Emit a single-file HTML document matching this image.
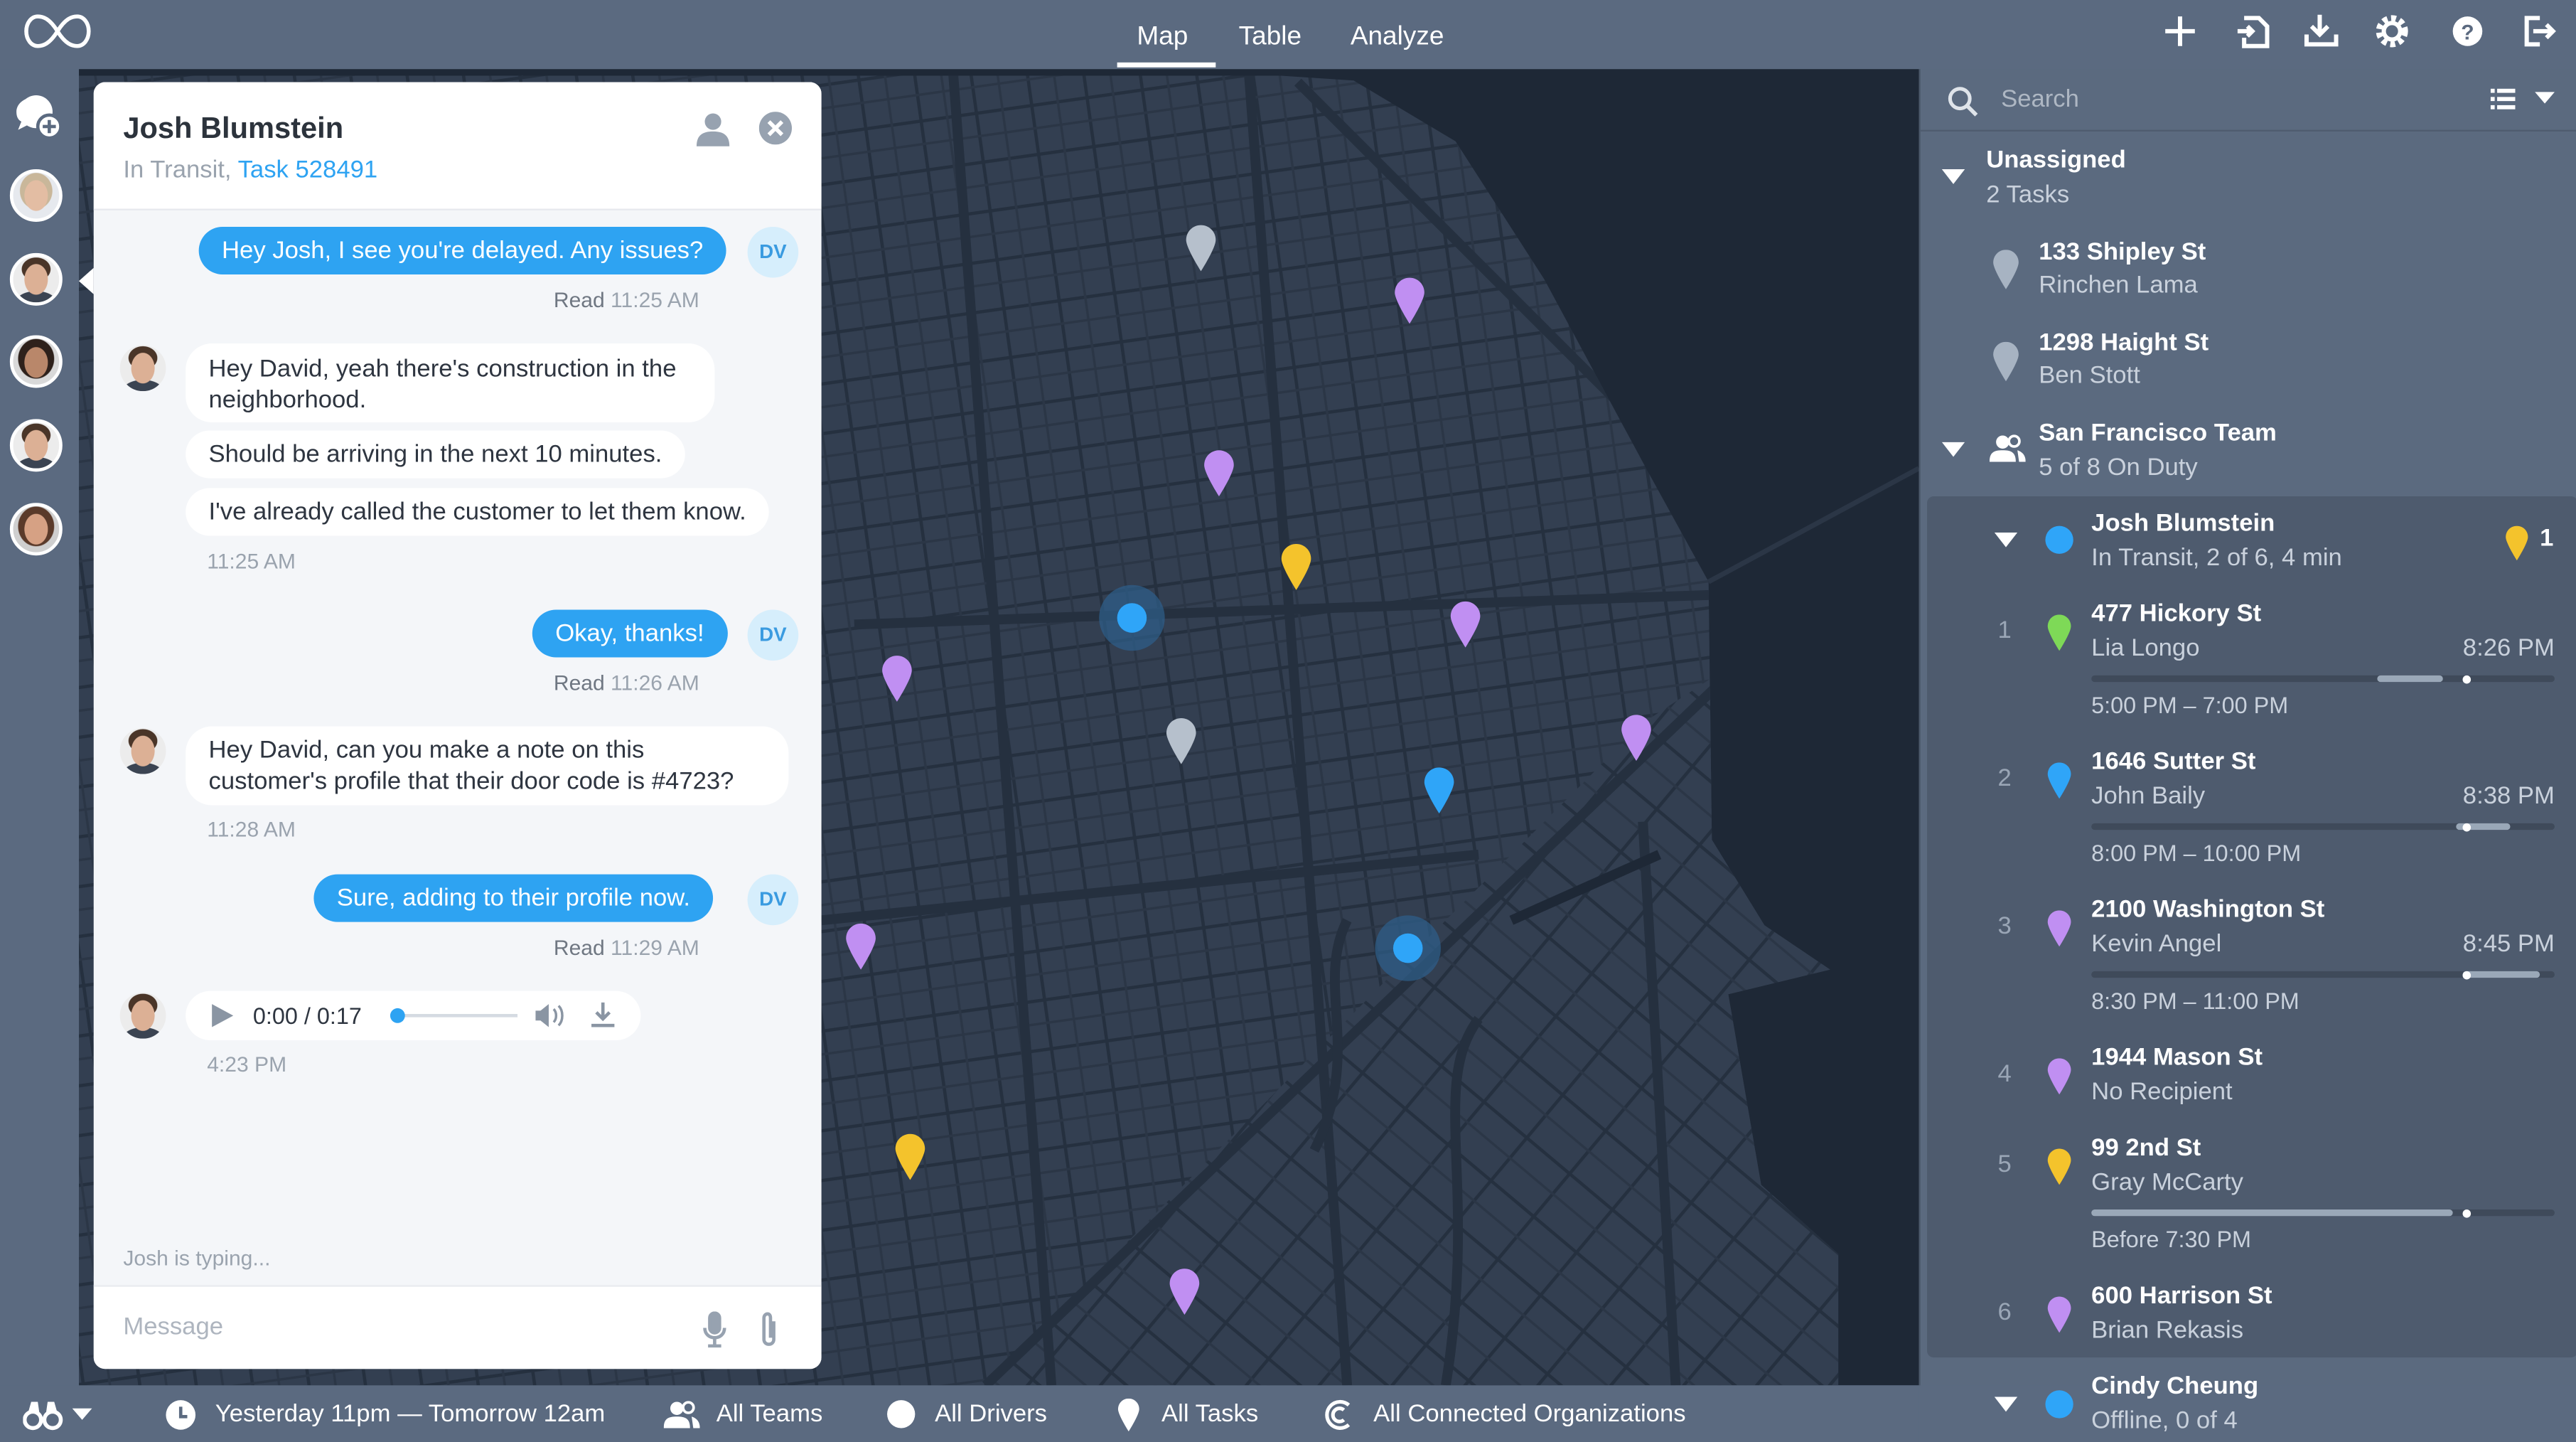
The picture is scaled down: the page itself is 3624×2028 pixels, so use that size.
<!DOCTYPE html>
<html><head><meta charset="utf-8"><style>
*{margin:0;padding:0;box-sizing:border-box}
html,body{width:3624px;height:2028px;overflow:hidden;background:#5b6a80}
#w{position:absolute;left:0;top:0;width:1568px;height:877.5px;transform:scale(2.31122);transform-origin:0 0;font-family:"Liberation Sans",sans-serif;background:#5b6a80;overflow:hidden}
.a{position:absolute}
.t{color:#fff;white-space:nowrap}
.rp .b{font-weight:bold;font-size:15px;color:#fff;position:absolute;white-space:nowrap}
.rp .s{font-size:15px;color:#c9d1dc;position:absolute;white-space:nowrap}
.rp .r{right:13px;left:auto!important}
.bub{position:absolute;border-radius:16px;font-size:15px;white-space:nowrap;height:29px;line-height:29px;padding:0 14px}
.me{background:#2ea3f2;color:#fff}
.them{background:#fff;color:#2e3540}
.dv{position:absolute;width:31px;height:31px;border-radius:50%;background:#d6eefc;color:#3a9be0;font-size:12px;font-weight:bold;text-align:center;line-height:31px}
.tm{position:absolute;font-size:13px;color:#9aa3ae;white-space:nowrap}
.tm b{color:#6f7782;font-weight:normal}
.av{position:absolute;width:32px;height:32px;border-radius:50%;border:2px solid #fff;background:radial-gradient(ellipse 26% 34% at 50% 50%,#dcb095 96%,transparent 100%),radial-gradient(ellipse 32% 26% at 50% 28%,#4a3528 96%,transparent 100%),radial-gradient(ellipse 45% 25% at 50% 100%,#3b4452 96%,transparent 100%),#ececec}
.bar{position:absolute;height:4px;border-radius:2px;background:#3f4a5a}
.num{position:absolute;color:#9aa6b6;font-size:15px}
</style></head><body><div id="w">
<!-- map -->
<svg class="a" style="left:48px;top:42px" width="1120" height="801" viewBox="48 42 1120 801">
<defs>
<pattern id="g1" width="34" height="30" patternUnits="userSpaceOnUse" patternTransform="rotate(-8)">
<rect width="34" height="30" fill="#333f51"/><path d="M0 0H34M0 0V30" stroke="#25303f" stroke-width="4"/><path d="M0 15H34M17 0V30" stroke="#2b3646" stroke-width="1.5"/></pattern>
<pattern id="g2" width="34" height="34" patternUnits="userSpaceOnUse" patternTransform="rotate(40)">
<rect width="34" height="34" fill="#333f51"/><path d="M0 0H34M0 0V34" stroke="#25303f" stroke-width="4"/><path d="M0 17H34" stroke="#2b3646" stroke-width="1.5"/></pattern>
<clipPath id="soma"><path d="M600 843L860 580L1000 440L1168 330V843Z"/></clipPath>
<clipPath id="land"><path id="lp" d="M48 46H779L824 49L886 86L940 170L1002 285L1040 354L1042 511L1074 563L1114 590L1052 605L1072 721L1119 763L1119 843H48Z"/></clipPath>
</defs>
<rect x="48" y="42" width="1120" height="801" fill="#1e2836"/>
<g clip-path="url(#land)">
<rect x="48" y="42" width="1120" height="801" fill="url(#g1)"/>
<rect x="48" y="42" width="1120" height="801" fill="url(#g2)" clip-path="url(#soma)"/>
<path d="M600 843L1168 300M520 380L1100 360M500 560L900 520M760 42L820 843M580 42L640 843M790 50L1040 300" stroke="#25303f" stroke-width="6" fill="none"/>
<path d="M820 560C800 600 830 640 800 700M900 620C870 660 900 720 880 843M1000 500L1020 843" stroke="#25303f" stroke-width="6" fill="none"/>
<path d="M920 560L1010 520" stroke="#1e2836" stroke-width="6"/>
</g>
<path d="M1040 354L1168 285" stroke="#2b3646" stroke-width="3"/>
<circle cx="689" cy="376" r="20" fill="#2e5f8c" opacity=".7"/><circle cx="689" cy="376" r="9" fill="#2fa5f8"/>
<circle cx="857" cy="577" r="20" fill="#2e5f8c" opacity=".7"/><circle cx="857" cy="577" r="9" fill="#2fa5f8"/>
<g>
<path transform="translate(722,137)" d="M9 0C4 0 0 4 0 9C0 14 9 28 9 28S18 14 18 9C18 4 14 0 9 0Z" fill="#b6c0cc"/>
<path transform="translate(849,169)" d="M9 0C4 0 0 4 0 9C0 14 9 28 9 28S18 14 18 9C18 4 14 0 9 0Z" fill="#c08ff2"/>
<path transform="translate(733,274)" d="M9 0C4 0 0 4 0 9C0 14 9 28 9 28S18 14 18 9C18 4 14 0 9 0Z" fill="#c08ff2"/>
<path transform="translate(780,331)" d="M9 0C4 0 0 4 0 9C0 14 9 28 9 28S18 14 18 9C18 4 14 0 9 0Z" fill="#f4c32c"/>
<path transform="translate(883,366)" d="M9 0C4 0 0 4 0 9C0 14 9 28 9 28S18 14 18 9C18 4 14 0 9 0Z" fill="#c08ff2"/>
<path transform="translate(537,399)" d="M9 0C4 0 0 4 0 9C0 14 9 28 9 28S18 14 18 9C18 4 14 0 9 0Z" fill="#c08ff2"/>
<path transform="translate(710,437)" d="M9 0C4 0 0 4 0 9C0 14 9 28 9 28S18 14 18 9C18 4 14 0 9 0Z" fill="#b6c0cc"/>
<path transform="translate(987,435)" d="M9 0C4 0 0 4 0 9C0 14 9 28 9 28S18 14 18 9C18 4 14 0 9 0Z" fill="#c08ff2"/>
<path transform="translate(867,467)" d="M9 0C4 0 0 4 0 9C0 14 9 28 9 28S18 14 18 9C18 4 14 0 9 0Z" fill="#2fa5f8"/>
<path transform="translate(515,562)" d="M9 0C4 0 0 4 0 9C0 14 9 28 9 28S18 14 18 9C18 4 14 0 9 0Z" fill="#c08ff2"/>
<path transform="translate(545,690)" d="M9 0C4 0 0 4 0 9C0 14 9 28 9 28S18 14 18 9C18 4 14 0 9 0Z" fill="#f4c32c"/>
<path transform="translate(712,772)" d="M9 0C4 0 0 4 0 9C0 14 9 28 9 28S18 14 18 9C18 4 14 0 9 0Z" fill="#c08ff2"/>
</g>
</svg>
<!-- top bar -->
<div class="a" style="left:0;top:0;width:1568px;height:42px;background:#5b6a80"></div>
<svg class="a" style="left:14px;top:8px" width="42" height="22" viewBox="0 0 42 22"><path d="M21 11C16 3 12 2 9 2 5 2 2 6 2 11s3 9 7 9c3 0 7-1 12-9s9-9 12-9c4 0 7 4 7 9s-3 9-7 9c-3 0-7-1-12-9Z" fill="none" stroke="#fff" stroke-width="2.4"/></svg>
<div class="a t" style="left:692px;top:14px;font-size:16px">Map</div>
<div class="a" style="left:680px;top:38px;width:60px;height:3px;background:#fff"></div>
<div class="a t" style="left:754px;top:14px;font-size:16px">Table</div>
<div class="a t" style="left:822px;top:14px;font-size:16px">Analyze</div>
<svg class="a" style="left:1310px;top:6px" width="250" height="26" viewBox="0 0 250 26" fill="none" stroke="#fff" stroke-width="2.6">
<path d="M17 4V22M8 13H26"/>
<path d="M56 5H65L70 10V22H56V17M52 13H61M58 10L61 13 58 16"/>
<path d="M102 3V14M97 10L102 15 107 10M94 15V21H112V15"/>
<circle cx="146" cy="13" r="5"/><circle cx="146" cy="13" r="8" stroke-dasharray="3 2.3" stroke-width="3.5"/>
<circle cx="192" cy="13" r="9" fill="#fff" stroke="none"/><text x="188" y="18" font-size="13" font-weight="bold" fill="#5b6a80" stroke="none" font-family="Liberation Sans">?</text>
<path d="M236 5H228V21H236M232 13H244M240 9L244 13 240 17"/>
</svg>
<!-- left sidebar -->
<div class="a" style="left:0;top:42px;width:48px;height:801px;background:#5b6a80"></div>
<svg class="a" style="left:8px;top:56px" width="32" height="32" viewBox="0 0 32 32"><path d="M14 3C7 3 2 7 2 12c0 3 1 5 3 6L3 23l6-3c1 0 3 1 5 1" fill="#fff"/><circle cx="14" cy="12" r="10" fill="#fff"/><circle cx="22" cy="21" r="7" fill="#fff" stroke="#5b6a80" stroke-width="2"/><path d="M22 17v8M18 21h8" stroke="#5b6a80" stroke-width="2"/></svg>
<div class="av" style="left:6px;top:103px;background:radial-gradient(ellipse 26% 34% at 50% 50%,#e3bda3 96%,transparent 100%),radial-gradient(ellipse 36% 40% at 50% 40%,#c9b79a 96%,transparent 100%),#e6e9ee"></div>
<div class="av" style="left:6px;top:154px"></div>
<div class="av" style="left:6px;top:204px;background:radial-gradient(ellipse 26% 34% at 50% 52%,#b9876a 96%,transparent 100%),radial-gradient(ellipse 40% 44% at 50% 44%,#2e211b 96%,transparent 100%),#d9d9d9"></div>
<div class="av" style="left:6px;top:255px"></div>
<div class="av" style="left:6px;top:306px;background:radial-gradient(ellipse 26% 34% at 50% 50%,#d6a184 96%,transparent 100%),radial-gradient(ellipse 40% 44% at 50% 44%,#5a3a2a 96%,transparent 100%),#cfcfcf"></div>
<div class="a" style="left:48px;top:163px;width:0;height:0;border-top:8px solid transparent;border-bottom:8px solid transparent;border-right:9px solid #fff"></div>
<!-- chat panel -->
<div class="a" style="left:57px;top:50px;width:443px;height:783px;background:#f4f6f9;border-radius:7px;overflow:hidden">
<div class="a" style="left:0;top:0;width:443px;height:78px;background:#fff;border-bottom:1px solid #e6e9ee"></div>
<div class="a" style="left:18px;top:18px;font-size:18px;color:#2c333c;font-weight:bold">Josh Blumstein</div>
<div class="a" style="left:18px;top:45px;font-size:15px;color:#9aa3ae">In Transit, <span style="color:#2ea3f2">Task 528491</span></div>
<svg class="a" style="left:366px;top:18px" width="22" height="22" viewBox="0 0 22 22"><circle cx="11" cy="6" r="5" fill="#97a2b0"/><path d="M1 21c0-7 4-9 10-9s10 2 10 9Z" fill="#97a2b0"/></svg>
<svg class="a" style="left:405px;top:18px" width="20" height="20" viewBox="0 0 20 20"><circle cx="10" cy="10" r="10" fill="#97a2b0"/><path d="M6 6l8 8M14 6l-8 8" stroke="#fff" stroke-width="2.4"/></svg>
<div class="a" style="left:0;top:732px;width:443px;height:51px;background:#fff;border-top:1px solid #e8ebef"></div>
<div class="a" style="left:18px;top:749px;font-size:15px;color:#aeb5bf">Message</div>
<svg class="a" style="left:370px;top:748px" width="50" height="22" viewBox="0 0 50 22" fill="none" stroke="#97a2b0" stroke-width="2"><rect x="5" y="1" width="6" height="12" rx="3" fill="#97a2b0"/><path d="M2 10c0 4 3 6 6 6s6-2 6-6M8 16v4M4 21h8"/><path d="M44 6v11c0 2-1.5 3-3 3s-3-1-3-3V4c0-1.5 1-2.5 2.2-2.5S42 2.5 42 4v12"/></svg>
<div class="a" style="left:18px;top:708px;font-size:13px;color:#9aa3ae">Josh is typing...</div>
</div>
<div class="bub me" style="left:121px;top:138px">Hey Josh, I see you're delayed. Any issues?</div>
<div class="dv" style="left:455px;top:138px">DV</div>
<div class="tm" style="left:337px;top:175px"><b>Read</b> 11:25 AM</div>
<div class="av" style="left:71px;top:208px;border-color:#f4f6f9"></div>
<div class="bub them" style="left:113px;top:209px;height:48px;line-height:19px;padding-top:6px;white-space:normal;width:322px">Hey David, yeah there's construction in the neighborhood.</div>
<div class="bub them" style="left:113px;top:262px">Should be arriving in the next 10 minutes.</div>
<div class="bub them" style="left:113px;top:297px">I've already called the customer to let them know.</div>
<div class="tm" style="left:126px;top:334px">11:25 AM</div>
<div class="bub me" style="left:324px;top:371px">Okay, thanks!</div>
<div class="dv" style="left:455px;top:371px">DV</div>
<div class="tm" style="left:337px;top:408px"><b>Read</b> 11:26 AM</div>
<div class="av" style="left:71px;top:441px;border-color:#f4f6f9"></div>
<div class="bub them" style="left:113px;top:442px;height:48px;line-height:19px;padding-top:5px;white-space:normal;width:367px">Hey David, can you make a note on this customer's profile that their door code is #4723?</div>
<div class="tm" style="left:126px;top:497px">11:28 AM</div>
<div class="bub me" style="left:191px;top:532px">Sure, adding to their profile now.</div>
<div class="dv" style="left:455px;top:532px">DV</div>
<div class="tm" style="left:337px;top:569px"><b>Read</b> 11:29 AM</div>
<div class="av" style="left:71px;top:602px;border-color:#f4f6f9"></div>
<div class="a" style="left:113px;top:603px;width:277px;height:30px;background:#fff;border-radius:15px"></div>
<svg class="a" style="left:128px;top:609px" width="250" height="18" viewBox="0 0 250 18"><path d="M1 2L14 9 1 16Z" fill="#8a95a3"/><rect x="117" y="8" width="70" height="2" fill="#d5dbe2"/><circle cx="114" cy="9" r="4.5" fill="#2ea3f2"/><path d="M198 6h3l5-4v14l-5-4h-3Z" fill="#8a95a3"/><path d="M209 5c2 2 2 6 0 8M212 3c3 3 3 9 0 12" stroke="#8a95a3" stroke-width="1.5" fill="none"/><path d="M239 1v9M235 7l4 4 4-4M232 15h14" stroke="#8a95a3" stroke-width="2" fill="none"/></svg>
<div class="a" style="left:154px;top:610px;font-size:14px;color:#2e3540">0:00 / 0:17</div>
<div class="tm" style="left:126px;top:640px">4:23 PM</div>
<!-- right panel -->
<div class="a rp" style="left:1168px;top:42px;width:400px;height:801px;background:#5b6a7f;border-left:1px solid #4c596b">
<div class="a" style="left:0;top:0;width:400px;height:38px;border-bottom:1px solid #4f5c6f"></div>
<svg class="a" style="left:16px;top:10px" width="20" height="20" viewBox="0 0 20 20"><circle cx="8" cy="8" r="6" stroke="#dfe4ea" stroke-width="2.2" fill="none"/><path d="M12.5 12.5L18 18" stroke="#dfe4ea" stroke-width="2.4"/></svg>
<div class="s" style="left:49px;top:10px;color:#aeb7c3">Search</div>
<svg class="a" style="left:347px;top:11px" width="42" height="16" viewBox="0 0 42 16" fill="#fff"><rect x="0" y="1" width="2.5" height="2.5"/><rect x="4" y="1" width="11" height="2.5"/><rect x="0" y="6" width="2.5" height="2.5"/><rect x="4" y="6" width="11" height="2.5"/><rect x="0" y="11" width="2.5" height="2.5"/><rect x="4" y="11" width="11" height="2.5"/><path d="M27 3H39L33 10Z"/></svg>
<svg class="a" style="left:13px;top:61px" width="14" height="10"><path d="M0 0H14L7 9Z" fill="#fff"/></svg>
<div class="b" style="left:40px;top:47px">Unassigned</div><div class="s" style="left:40px;top:68px">2 Tasks</div>
<svg class="a" style="left:44px;top:110px" width="16" height="24" viewBox="0 0 18 28"><path d="M9 0C4 0 0 4 0 9C0 14 9 28 9 28S18 14 18 9C18 4 14 0 9 0Z" fill="#a7b3c2"/></svg>
<div class="b" style="left:72px;top:103px">133 Shipley St</div><div class="s" style="left:72px;top:123px">Rinchen Lama</div>
<svg class="a" style="left:44px;top:166px" width="16" height="24" viewBox="0 0 18 28"><path d="M9 0C4 0 0 4 0 9C0 14 9 28 9 28S18 14 18 9C18 4 14 0 9 0Z" fill="#a7b3c2"/></svg>
<div class="b" style="left:72px;top:158px">1298 Haight St</div><div class="s" style="left:72px;top:178px">Ben Stott</div>
<svg class="a" style="left:13px;top:227px" width="14" height="10"><path d="M0 0H14L7 9Z" fill="#fff"/></svg>
<svg class="a" style="left:42px;top:222px" width="22" height="18" viewBox="0 0 22 18" fill="#fff"><circle cx="8" cy="5" r="4"/><path d="M0 17c0-6 3-7 8-7s8 1 8 7Z"/><circle cx="15" cy="4.5" r="3.2" fill="none" stroke="#fff" stroke-width="1.6"/><path d="M17 10c3 1 5 3 5 7h-4" fill="#fff"/></svg>
<div class="b" style="left:72px;top:213px">San Francisco Team</div><div class="s" style="left:72px;top:234px">5 of 8 On Duty</div>
<div class="a" style="left:4px;top:260px;width:396px;height:524px;background:#4e5b6e;border-radius:4px"></div>
<svg class="a" style="left:45px;top:282px" width="14" height="10"><path d="M0 0H14L7 9Z" fill="#fff"/></svg>
<div class="a" style="left:76px;top:278px;width:17px;height:17px;border-radius:50%;background:#2fa5f8"></div>
<div class="b" style="left:104px;top:268px">Josh Blumstein</div><div class="s" style="left:104px;top:289px">In Transit, 2 of 6, 4 min</div>
<svg class="a" style="left:356px;top:278px" width="14" height="21" viewBox="0 0 18 28"><path d="M9 0C4 0 0 4 0 9C0 14 9 28 9 28S18 14 18 9C18 4 14 0 9 0Z" fill="#f4c32c"/></svg>
<div class="b" style="left:377px;top:277px">1</div>
<div class="num" style="left:47px;top:333px">1</div>
<svg class="a" style="left:77px;top:332px" width="15" height="22" viewBox="0 0 18 28"><path d="M9 0C4 0 0 4 0 9C0 14 9 28 9 28S18 14 18 9C18 4 14 0 9 0Z" fill="#7ed957"/></svg>
<div class="b" style="left:104px;top:323px">477 Hickory St</div><div class="s" style="left:104px;top:344px">Lia Longo</div><div class="s r" style="top:344px">8:26 PM</div>
<div class="bar" style="left:104px;top:369px;width:282px"></div><div class="bar" style="left:278px;top:369px;width:40px;background:#9aa8b8"></div><div class="a" style="left:330px;top:369px;width:5px;height:5px;border-radius:50%;background:#fff"></div>
<div class="s" style="left:104px;top:379px;font-size:14px">5:00 PM – 7:00 PM</div>
<div class="num" style="left:47px;top:423px">2</div>
<svg class="a" style="left:77px;top:422px" width="15" height="22" viewBox="0 0 18 28"><path d="M9 0C4 0 0 4 0 9C0 14 9 28 9 28S18 14 18 9C18 4 14 0 9 0Z" fill="#2fa5f8"/></svg>
<div class="b" style="left:104px;top:413px">1646 Sutter St</div><div class="s" style="left:104px;top:434px">John Baily</div><div class="s r" style="top:434px">8:38 PM</div>
<div class="bar" style="left:104px;top:459px;width:282px"></div><div class="bar" style="left:326px;top:459px;width:33px;background:#9aa8b8"></div><div class="a" style="left:330px;top:459px;width:5px;height:5px;border-radius:50%;background:#fff"></div>
<div class="s" style="left:104px;top:469px;font-size:14px">8:00 PM – 10:00 PM</div>
<div class="num" style="left:47px;top:513px">3</div>
<svg class="a" style="left:77px;top:512px" width="15" height="22" viewBox="0 0 18 28"><path d="M9 0C4 0 0 4 0 9C0 14 9 28 9 28S18 14 18 9C18 4 14 0 9 0Z" fill="#c08ff2"/></svg>
<div class="b" style="left:104px;top:503px">2100 Washington St</div><div class="s" style="left:104px;top:524px">Kevin Angel</div><div class="s r" style="top:524px">8:45 PM</div>
<div class="bar" style="left:104px;top:549px;width:282px"></div><div class="bar" style="left:330px;top:549px;width:47px;background:#9aa8b8"></div><div class="a" style="left:330px;top:549px;width:5px;height:5px;border-radius:50%;background:#fff"></div>
<div class="s" style="left:104px;top:559px;font-size:14px">8:30 PM – 11:00 PM</div>
<div class="num" style="left:47px;top:603px">4</div>
<svg class="a" style="left:77px;top:602px" width="15" height="22" viewBox="0 0 18 28"><path d="M9 0C4 0 0 4 0 9C0 14 9 28 9 28S18 14 18 9C18 4 14 0 9 0Z" fill="#c08ff2"/></svg>
<div class="b" style="left:104px;top:593px">1944 Mason St</div><div class="s" style="left:104px;top:614px">No Recipient</div>
<div class="num" style="left:47px;top:658px">5</div>
<svg class="a" style="left:77px;top:657px" width="15" height="22" viewBox="0 0 18 28"><path d="M9 0C4 0 0 4 0 9C0 14 9 28 9 28S18 14 18 9C18 4 14 0 9 0Z" fill="#f4c32c"/></svg>
<div class="b" style="left:104px;top:648px">99 2nd St</div><div class="s" style="left:104px;top:669px">Gray McCarty</div>
<div class="bar" style="left:104px;top:694px;width:282px"></div><div class="bar" style="left:104px;top:694px;width:220px;background:#9aa8b8"></div><div class="a" style="left:330px;top:694px;width:5px;height:5px;border-radius:50%;background:#fff"></div>
<div class="s" style="left:104px;top:704px;font-size:14px">Before 7:30 PM</div>
<div class="num" style="left:47px;top:748px">6</div>
<svg class="a" style="left:77px;top:747px" width="15" height="22" viewBox="0 0 18 28"><path d="M9 0C4 0 0 4 0 9C0 14 9 28 9 28S18 14 18 9C18 4 14 0 9 0Z" fill="#c08ff2"/></svg>
<div class="b" style="left:104px;top:738px">600 Harrison St</div><div class="s" style="left:104px;top:759px">Brian Rekasis</div>
<svg class="a" style="left:45px;top:808px" width="14" height="10"><path d="M0 0H14L7 9Z" fill="#fff"/></svg>
<div class="a" style="left:76px;top:804px;width:17px;height:17px;border-radius:50%;background:#2fa5f8"></div>
<div class="b" style="left:104px;top:793px">Cindy Cheung</div><div class="s" style="left:104px;top:814px">Offline, 0 of 4</div>
</div>
<!-- bottom bar -->
<div class="a" style="left:0;top:843px;width:1168px;height:35px;background:#5b6a80"></div>
<svg class="a" style="left:14px;top:851px" width="44" height="20" viewBox="0 0 44 20" fill="#fff"><circle cx="6" cy="13" r="5" fill="none" stroke="#fff" stroke-width="2.4"/><circle cx="18" cy="13" r="5" fill="none" stroke="#fff" stroke-width="2.4"/><path d="M3 9L5 2H9L10 9ZM14 9L15 2H19L21 9Z"/><path d="M30 6H42L36 13Z"/></svg>
<svg class="a" style="left:100px;top:851px" width="20" height="20" viewBox="0 0 20 20"><circle cx="10" cy="10" r="9" fill="#fff"/><path d="M10 5V11H14" stroke="#5b6a80" stroke-width="2" fill="none"/></svg>
<div class="a t" style="left:131px;top:852px;font-size:15px">Yesterday 11pm — Tomorrow 12am</div>
<svg class="a" style="left:404px;top:852px" width="22" height="18" viewBox="0 0 22 18" fill="#fff"><circle cx="8" cy="5" r="4"/><path d="M0 17c0-6 3-7 8-7s8 1 8 7Z"/><circle cx="15" cy="4.5" r="3.2" fill="none" stroke="#fff" stroke-width="1.6"/><path d="M17 10c3 1 5 3 5 7h-4"/></svg>
<div class="a t" style="left:436px;top:852px;font-size:15px">All Teams</div>
<div class="a" style="left:540px;top:852px;width:17px;height:17px;border-radius:50%;background:#fff"></div>
<div class="a t" style="left:569px;top:852px;font-size:15px">All Drivers</div>
<svg class="a" style="left:680px;top:851px" width="14" height="20" viewBox="0 0 18 28"><path d="M9 0C4 0 0 4 0 9C0 14 9 28 9 28S18 14 18 9C18 4 14 0 9 0Z" fill="#fff"/></svg>
<div class="a t" style="left:707px;top:852px;font-size:15px">All Tasks</div>
<svg class="a" style="left:805px;top:851px" width="20" height="20" viewBox="0 0 20 20" fill="none" stroke="#fff" stroke-width="2.2"><path d="M16 4A8 8 0 1 0 16 16"/><path d="M13 7A4 4 0 1 0 13 13"/></svg>
<div class="a t" style="left:836px;top:852px;font-size:15px">All Connected Organizations</div>
</div></body></html>
